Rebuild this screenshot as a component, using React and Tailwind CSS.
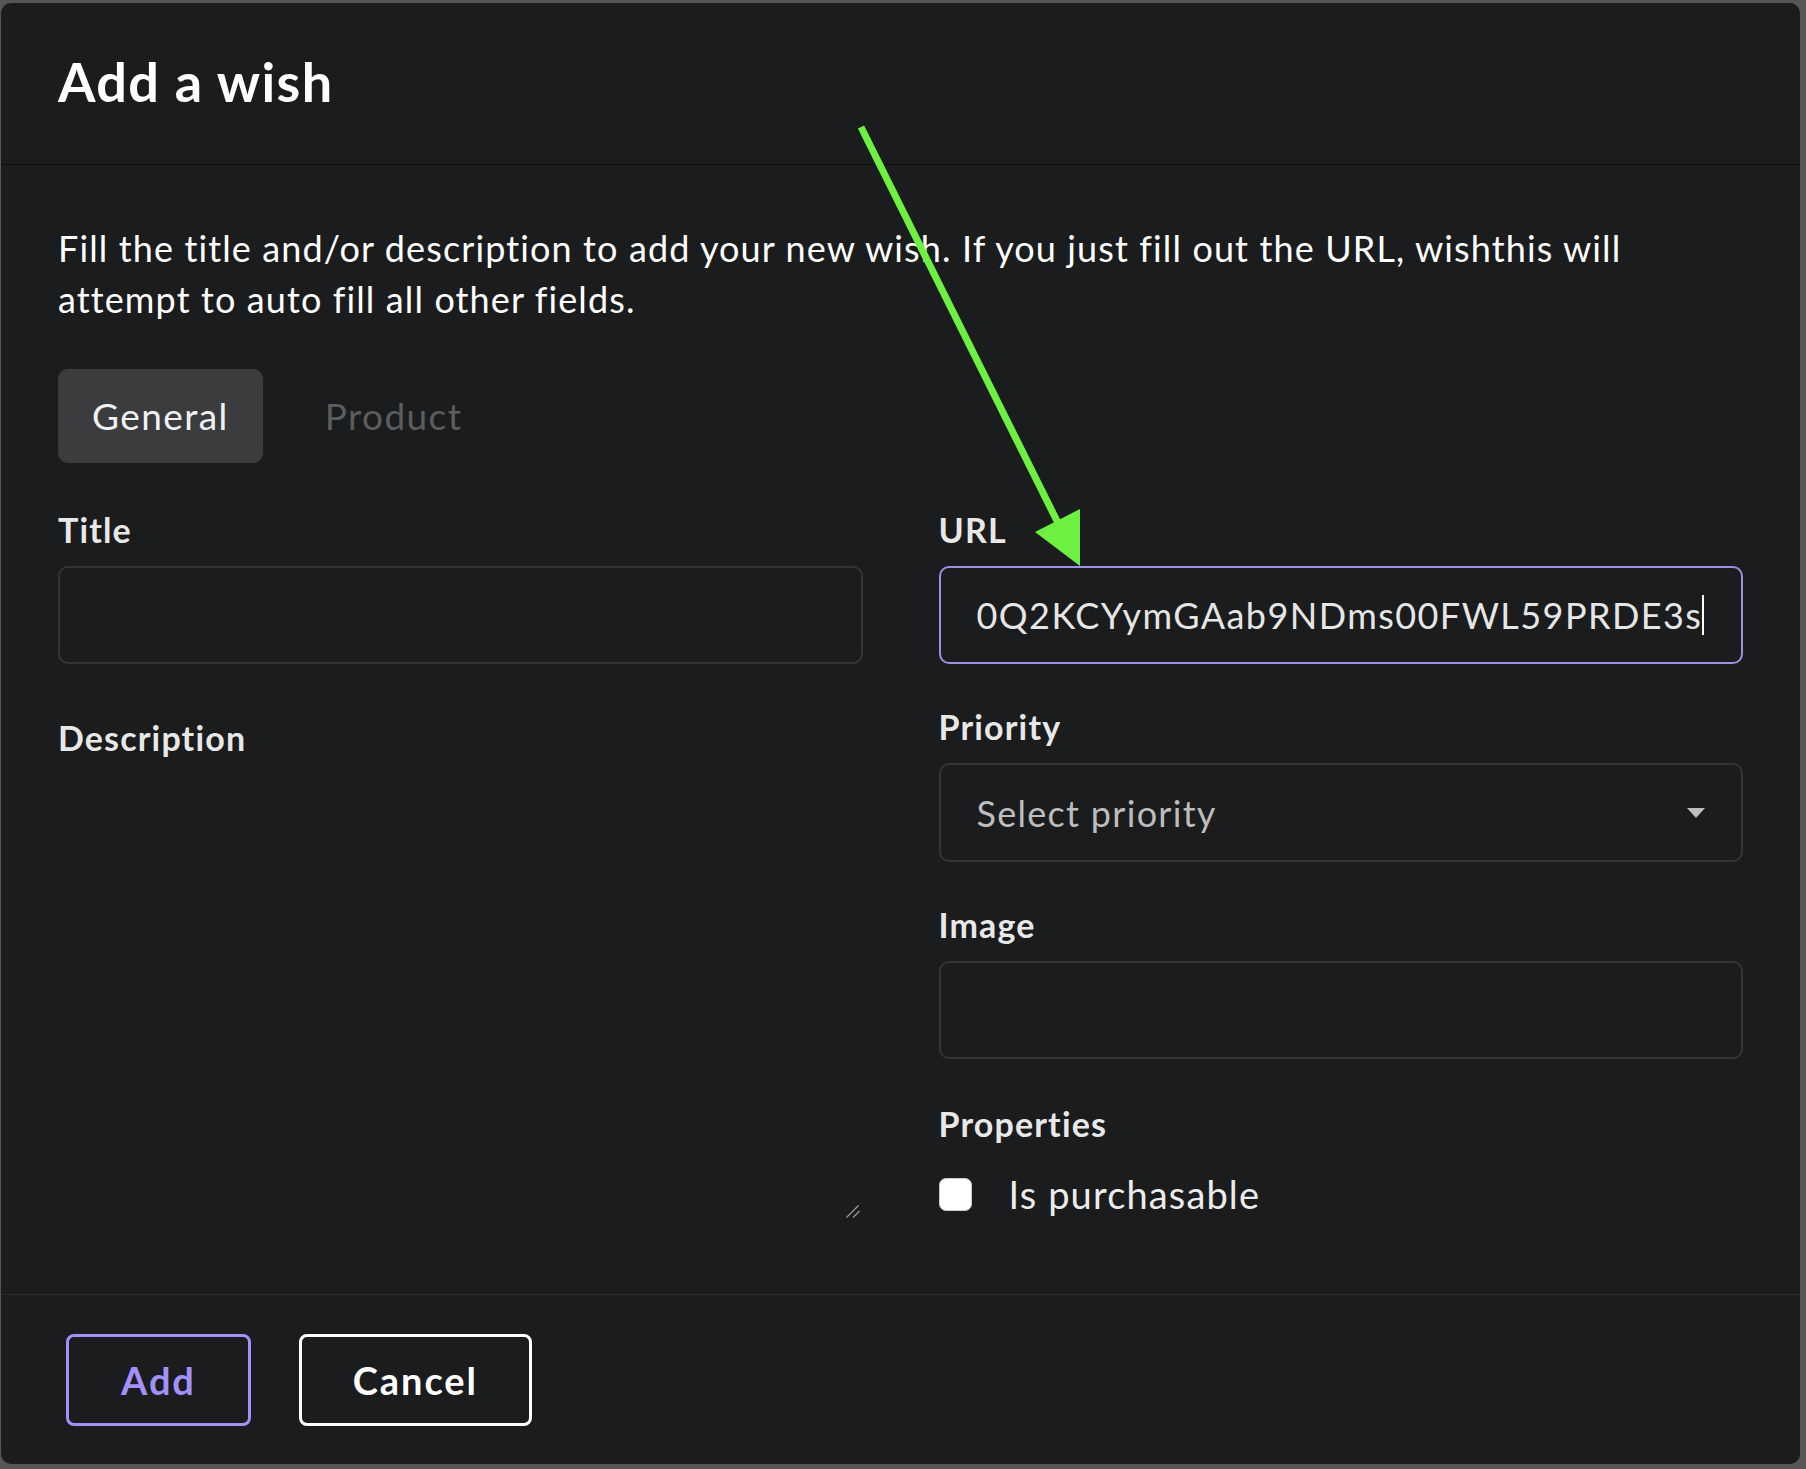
import { useState } from 'react';

const FONT = "font-['Lato','Noto_Sans',sans-serif]";

function Label({ children }) {
  return (
    <div className="text-[34px] leading-[41px] font-bold tracking-[0.034em] text-[#e8e8e8] mb-[16px]">{children}</div>
  );
}

function TextBox({ children, focused }) {
  return (
    <div
      className={
        'h-[98px] rounded-[10px] border-2 flex items-center pl-[36px] pr-[26px] ' +
        (focused ? 'border-[#9f8ee4]' : 'border-[#333436]')
      }
    >
      {children}
    </div>
  );
}

export default function App() {
  const [tab, setTab] = useState('general');
  const [purchasable, setPurchasable] = useState(false);

  return (
    <div className={`relative w-[1806px] h-[1469px] bg-[#565656] pt-[3px] pl-[1px] ${FONT}`}>
      <div className="w-[1799px] h-[1461px] rounded-[10px] bg-[#1b1c1d] flex flex-col overflow-hidden">
        {/* header */}
        <div className="h-[162px] shrink-0 border-b border-[#0f1011] px-[57px] pt-[46px]">
          <h1 className="text-[54px] leading-[65px] font-bold tracking-[0.025em] text-white">Add a wish</h1>
        </div>

        {/* content */}
        <div className="flex-1 px-[57px] pt-[58px]">
          <p className="text-[36px] leading-[51px] tracking-[0.031em] text-white">
            Fill the title and/or description to add your new wish. If you just fill out the URL, wishthis will
            <br />
            attempt to auto fill all other fields.
          </p>

          <div className="flex mt-[44px]">
            <button
              type="button"
              onClick={() => setTab('general')}
              className={
                'h-[94px] px-[34px] rounded-[10px] text-[37px] tracking-[0.038em] ' +
                (tab === 'general' ? 'bg-[#3b3c3e] text-[#f2f2f2]' : 'text-[#5c5d5e]')
              }
            >General</button>
            <button
              type="button"
              onClick={() => setTab('product')}
              className={
                'h-[94px] px-[34px] ml-[28px] rounded-[10px] text-[37px] tracking-[0.038em] ' +
                (tab === 'product' ? 'bg-[#3b3c3e] text-[#f2f2f2]' : 'text-[#5c5d5e]')
              }
            >Product</button>
          </div>

          <div className="grid grid-cols-2 gap-x-[76px] mt-[46px]">
            {/* left column */}
            <div className="flex flex-col">
              <Label>Title</Label>
              <TextBox />

              <div className="mt-[53px]">
                <Label>Description</Label>
              </div>
              <div className="relative h-[444px]">
                <textarea
                  className="h-full w-full resize-none bg-transparent border-0 outline-none text-[36px] text-[#e6e6e6]"
                />
                <svg className="absolute right-[3px] bottom-0" width="14" height="14" viewBox="0 0 14 14">
                  <line x1="0.5" y1="13.5" x2="12.5" y2="1.5" stroke="#9a9a9a" strokeWidth="1.3" />
                  <line x1="7" y1="13.5" x2="13.5" y2="7" stroke="#9a9a9a" strokeWidth="1.3" />
                </svg>
              </div>
            </div>

            {/* right column */}
            <div className="flex flex-col">
              <Label>URL</Label>
              <TextBox focused>
                <div className="flex items-center text-[36px] tracking-[0.04em] text-[#e6e6e6] whitespace-nowrap overflow-hidden">
                  <span>0Q2KCYymGAab9NDms00FWL59PRDE3s</span>
                  <span className="w-[2px] h-[40px] bg-white shrink-0" />
                </div>
              </TextBox>

              <div className="mt-[42px]">
                <Label>Priority</Label>
              </div>
              <div className="h-[99px] rounded-[10px] border-2 border-[#333436] flex items-center justify-between pl-[36px] pr-[36px]">
                <span className="text-[36px] tracking-[0.036em] text-[#bdbdbd]">Select priority</span>
                <svg width="18" height="10" viewBox="0 0 18 10">
                  <polygon points="0,0 18,0 9,10" fill="#bdbdbd" />
                </svg>
              </div>

              <div className="mt-[42px]">
                <Label>Image</Label>
              </div>
              <TextBox />

              <div className="mt-[44px]">
                <div className="text-[34px] leading-[41px] font-bold tracking-[0.034em] text-[#e8e8e8]">Properties</div>
              </div>
              <label className="flex items-center mt-[22px] cursor-pointer">
                <span
                  onClick={() => setPurchasable(!purchasable)}
                  className="w-[33px] h-[33px] rounded-[7px] bg-white border border-[#c8c8c8] flex items-center justify-center"
                >
                  {purchasable && (
                    <svg width="20" height="20" viewBox="0 0 20 20">
                      <path d="M4 10l4 4 8-9" stroke="#1b1c1d" strokeWidth="3" fill="none" />
                    </svg>
                  )}
                </span>
                <span className="ml-[37px] text-[38px] tracking-[0.03em] text-[#ececec]">Is purchasable</span>
              </label>
            </div>
          </div>
        </div>

        {/* actions */}
        <div className="h-[170px] shrink-0 border-t border-[#2a2b2d] px-[57px] pt-[39px] flex items-start gap-[48px]">
          <button
            type="button"
            className="ml-[8px] h-[92px] px-[52px] rounded-[8px] border-[3px] border-[#a291fb] text-[#a291fb] text-[38px] font-bold tracking-[0.05em]"
          >Add</button>
          <button
            type="button"
            className="h-[92px] px-[51px] rounded-[8px] border-[3px] border-white text-white text-[38px] font-bold tracking-[0.05em]"
          >Cancel</button>
        </div>
      </div>

      {/* annotation arrow */}
      <svg className="absolute inset-0 pointer-events-none" width="1806" height="1469">
        <line x1="861" y1="127" x2="1060" y2="527" stroke="#6ef043" strokeWidth="7" />
        <polygon points="1035,532 1080,509 1080,566" fill="#6ef043" />
      </svg>
    </div>
  );
}
